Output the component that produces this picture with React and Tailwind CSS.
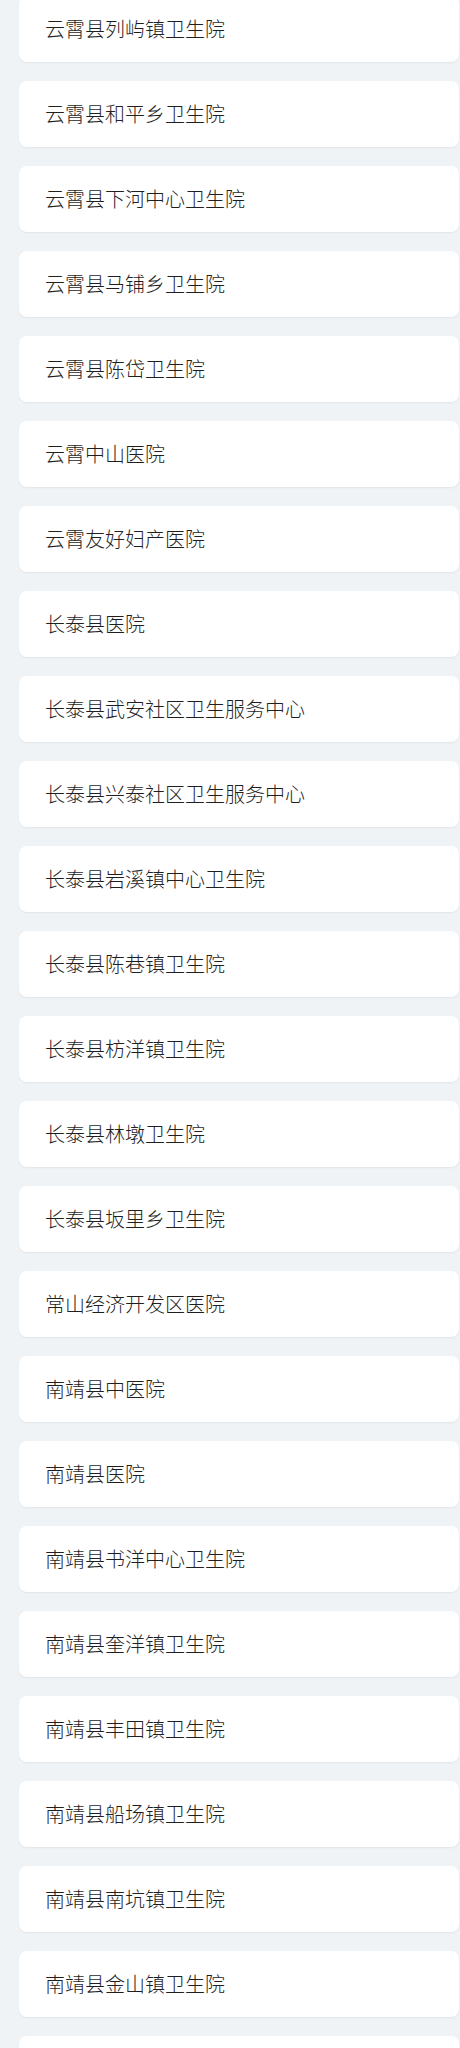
import React from "react";

const names = [
  "云霄县列屿镇卫生院",
  "云霄县和平乡卫生院",
  "云霄县下河中心卫生院",
  "云霄县马铺乡卫生院",
  "云霄县陈岱卫生院",
  "云霄中山医院",
  "云霄友好妇产医院",
  "长泰县医院",
  "长泰县武安社区卫生服务中心",
  "长泰县兴泰社区卫生服务中心",
  "长泰县岩溪镇中心卫生院",
  "长泰县陈巷镇卫生院",
  "长泰县枋洋镇卫生院",
  "长泰县林墩卫生院",
  "长泰县坂里乡卫生院",
  "常山经济开发区医院",
  "南靖县中医院",
  "南靖县医院",
  "南靖县书洋中心卫生院",
  "南靖县奎洋镇卫生院",
  "南靖县丰田镇卫生院",
  "南靖县船场镇卫生院",
  "南靖县南坑镇卫生院",
  "南靖县金山镇卫生院",
];

export default function App() {
  return (
    <div className="min-h-[2048px] w-[460px] overflow-hidden bg-[#eff3f6] font-['Noto_Sans_CJK_SC','Noto_Sans',sans-serif]">
      <div className="-mt-[4px] flex flex-col gap-[19px] pl-[19px] pr-[1px]">
        {names.map((n) => (
          <div
            key={n}
            className="flex h-[66px] w-[440px] items-center rounded-[8px] bg-white pl-[26px] shadow-[0_1px_2px_rgba(0,0,0,0.06)]"
          >
            <span className="text-[20px] font-light leading-none text-[#1f1f1f]">{n}</span>
          </div>
        ))}
        <div className="h-[66px] w-[440px] rounded-[8px] bg-white shadow-[0_1px_2px_rgba(0,0,0,0.06)]" />
      </div>
    </div>
  );
}
